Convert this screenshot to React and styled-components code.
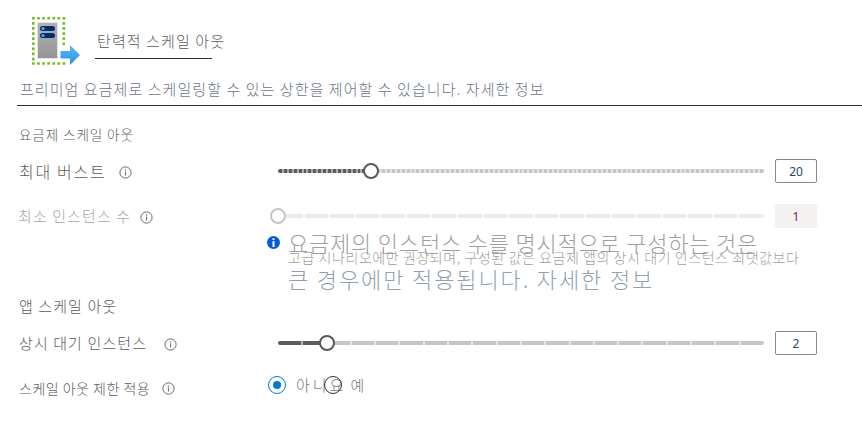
import React from "react";
import styled, { createGlobalStyle } from "styled-components";

const Global = createGlobalStyle`
  * { box-sizing: border-box; }
  body { margin: 0; background: #fff; overflow: hidden; }
`;

const Page = styled.main`
  width: 862px;
  height: 439px;
  overflow: hidden;
  background: #fff;
  font-family: "Noto Sans CJK KR", sans-serif;
  font-weight: 300;
`;

const Text = styled.span`
  display: block;
  white-space: nowrap;
  font-size: ${(p) => p.$size}px;
  line-height: 20px;
  letter-spacing: ${(p) => p.$spacing}px;
  color: ${(p) => p.$color || "#5c5c5c"};
`;

const Header = styled.header`
  display: flex;
  height: 75px;
  padding: 16px 0 0 31px;
`;

const TitleBox = styled.div`
  width: 117px;
  height: 43px;
  margin-left: 14px;
  padding: 15px 0 0 2px;
  border-bottom: 1px solid #323130;
`;

const Intro = styled.div`
  height: 31px;
  margin-left: 17px;
  padding: 4px 0 0 3px;
  border-bottom: 1px solid #323130;
`;

const SectionTitle = styled.div`
  display: flex;
  align-items: center;
  height: ${(p) => p.$height}px;
  padding: ${(p) => p.$top || 0}px 0 0 19px;
`;

const Row = styled.div`
  display: grid;
  grid-template-columns: 278px 486px 53px;
  align-items: center;
  height: ${(p) => p.$height}px;
  margin-top: ${(p) => p.$gap || 0}px;
`;

const Label = styled.div`
  display: flex;
  align-items: center;
  padding: ${(p) => p.$top || 0}px 0 0 ${(p) => p.$left || 19}px;
`;

const LabelText = styled.div`
  width: ${(p) => p.$width}px;
  flex: none;
`;

const InfoSvg = styled.svg`
  display: block;
  flex: none;
  margin-top: 2px;
`;

const Track = styled.div`
  position: relative;
  height: 4px;
  border-radius: 2px;
  background:
    repeating-linear-gradient(
        to right,
        transparent 0,
        transparent ${(p) => p.$step - 2}px,
        ${(p) => p.$tickColor} ${(p) => p.$step - 2}px,
        ${(p) => p.$tickColor} ${(p) => p.$step}px
      )
      1px 0 / calc(100% - 4px) 100% no-repeat,
    linear-gradient(to right, ${(p) => p.$fill} ${(p) => p.$at}px, ${(p) => p.$rest} ${(p) => p.$at}px);
`;

const Thumb = styled.div`
  position: absolute;
  top: -6px;
  left: ${(p) => p.$at - 8}px;
  width: 16px;
  height: 16px;
  border: 2px solid ${(p) => p.$color};
  border-radius: 50%;
  background: #fff;
`;

const ValueBox = styled.div`
  width: 42px;
  height: 24px;
  margin-left: 11px;
  border: 1px solid ${(p) => (p.$disabled ? "#f3f2f1" : "#8a8886")};
  border-radius: 2px;
  background: ${(p) => (p.$disabled ? "#f3f2f1" : "#fff")};
  color: ${(p) => (p.$disabled ? "#7b2058" : "#254a5c")};
  font: 400 12px/23px "Noto Sans", sans-serif;
  text-align: center;
`;

const Notice = styled.div`
  display: flex;
  height: 68px;
  padding: 8px 0 0 267px;
`;

const NoticeText = styled.div`
  margin: -4px 0 0 8px;
`;

const NoticeLine = styled.div`
  height: ${(p) => p.$height}px;
`;

const RadioGroup = styled.div`
  display: flex;
  align-items: center;
  margin-left: -10px;
`;

const Radio = styled.span`
  display: grid;
  place-items: center;
  flex: none;
  width: 18px;
  height: 18px;
  border: 1px solid ${(p) => (p.$checked ? "#0078d4" : "#323130")};
  border-radius: 50%;
  margin-left: ${(p) => p.$offset || 0}px;
  &::after {
    content: "";
    width: 8px;
    height: 8px;
    border-radius: 50%;
    background: ${(p) => (p.$checked ? "#0078d4" : "transparent")};
  }
`;

const RadioLabel = styled.div`
  margin-left: ${(p) => p.$offset}px;
`;

const Info = () => (
  <InfoSvg width="13" height="13" viewBox="0 0 13 13">
    <circle cx="6.5" cy="6.5" r="5.6" fill="none" stroke="#686868" />
    <path d="M6.5 5.5V9.5" stroke="#777" strokeWidth="1.2" />
    <circle cx="6.5" cy="3.9" r=".75" fill="#777" />
  </InfoSvg>
);

const ScaleIcon = () => (
  <svg width="50" height="50" viewBox="0 0 50 50">
    <defs>
      <linearGradient id="server" x2="0" y2="1">
        <stop stopColor="#b2b2b2" />
        <stop offset="1" stopColor="#949494" />
      </linearGradient>
      <linearGradient id="arrow" x2="0" y2="1">
        <stop stopColor="#5eb5f7" />
        <stop offset="1" stopColor="#2e93e6" />
      </linearGradient>
    </defs>
    <g stroke="#76bc2d" strokeWidth="2.6" strokeDasharray="2.7 2.4" fill="none">
      <path d="M1 2.3H34.5M1 47.5H34.5" />
      <path d="M2.3 6V46M32.8 6V30" />
    </g>
    <rect x="6.5" y="6.5" width="20" height="36" rx="1" fill="url(#server)" stroke="#e2e2e2" />
    <rect x="9" y="10" width="15" height="5" rx="2.5" fill="#003067" />
    <rect x="9" y="17" width="15" height="5" rx="2.5" fill="#003067" />
    <circle cx="12" cy="12.5" r="1.6" fill="#5ea0ef" />
    <circle cx="12" cy="19.5" r="1.6" fill="#5ea0ef" />
    <path d="M29.5 35H39V29L49 39L39 49V42.5H29.5Z" fill="url(#arrow)" />
  </svg>
);

const NoticeIcon = () => (
  <svg width="13" height="13" viewBox="0 0 13 13">
    <circle cx="6.5" cy="6.5" r="6.5" fill="#015cda" />
    <circle cx="6.5" cy="3.2" r="1.1" fill="#fff" />
    <path d="M6.5 5.2V11" stroke="#fff" strokeWidth="2" />
  </svg>
);

const Slider = ({ step, at, fill, rest, tickColor, thumb }) => (
  <Track $step={step} $at={at} $fill={fill} $rest={rest} $tickColor={tickColor}>
    <Thumb $at={at} $color={thumb} />
  </Track>
);

export default function App() {
  return (
    <>
      <Global />
      <Page>
        <Header>
          <ScaleIcon />
          <TitleBox>
            <Text $size={15} $spacing={1.1}>탄력적 스케일 아웃</Text>
          </TitleBox>
        </Header>
        <Intro>
          <Text $size={15} $spacing={1.07} $color="#6d7485">
            프리미엄 요금제로 스케일링할 수 있는 상한을 제어할 수 있습니다. 자세한 정보
          </Text>
        </Intro>
        <SectionTitle $height={53} $top={3}>
          <Text $size={13.5} $spacing={0.95}>요금제 스케일 아웃</Text>
        </SectionTitle>
        <Row $height={24}>
          <Label>
            <LabelText $width={100}><Text $size={16} $spacing={1.7}>최대 버스트</Text></LabelText>
            <Info />
          </Label>
          <Slider step={486 / 99} at={93} fill="#5e5c5a" rest="#c6c5c4" tickColor="rgba(255,255,255,.5)" thumb="#5b5957" />
          <ValueBox>20</ValueBox>
        </Row>
        <Row $height={24} $gap={21}>
          <Label $left={18}>
            <LabelText $width={122}><Text $size={15} $spacing={1.1} $color="#a8a6a4">최소 인스턴스 수</Text></LabelText>
            <Info />
          </Label>
          <Slider step={486 / 19} at={0} fill="#edebe9" rest="#edebe9" tickColor="#fafafa" thumb="#c8c6c4" />
          <ValueBox $disabled>1</ValueBox>
        </Row>
        <Notice>
          <NoticeIcon />
          <NoticeText>
            <NoticeLine $height={15}><Text $size={22} $spacing={0.8} $color="#a19f9d">요금제의 인스턴스 수를 명시적으로 구성하는 것은</Text></NoticeLine>
            <NoticeLine $height={21}><Text $size={14} $spacing={0.57} $color="#a19f9d">고급 시나리오에만 권장되며, 구성된 값은 요금제 앱의 상시 대기 인스턴스 최댓값보다</Text></NoticeLine>
            <NoticeLine $height={24}><Text $size={22} $spacing={1.88} $color="#929fb1">큰 경우에만 적용됩니다. 자세한 정보</Text></NoticeLine>
          </NoticeText>
        </Notice>
        <SectionTitle $height={20}>
          <Text $size={15} $spacing={1.1}>앱 스케일 아웃</Text>
        </SectionTitle>
        <Row $height={54}>
          <Label>
            <LabelText $width={145}><Text $size={15} $spacing={1.1}>상시 대기 인스턴스</Text></LabelText>
            <Info />
          </Label>
          <Slider step={486 / 20} at={49} fill="#5e5c5a" rest="#c8c6c4" tickColor="rgba(255,255,255,.55)" thumb="#5b5957" />
          <ValueBox>2</ValueBox>
        </Row>
        <Row $height={30}>
          <Label $top={5}>
            <LabelText $width={143}><Text $size={14} $spacing={0.5}>스케일 아웃 제한 적용</Text></LabelText>
            <Info />
          </Label>
          <RadioGroup>
            <Radio $checked />
            <RadioLabel $offset={10}><Text $size={15} $spacing={3} $color="#777">아니요</Text></RadioLabel>
            <Radio $offset={-22} />
            <RadioLabel $offset={8}><Text $size={15} $spacing={2} $color="#777">예</Text></RadioLabel>
          </RadioGroup>
        </Row>
      </Page>
    </>
  );
}
